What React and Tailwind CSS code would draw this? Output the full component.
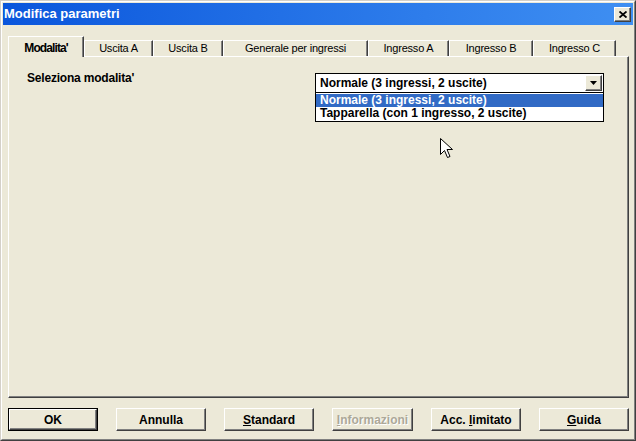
const tabs = [
  { label: "Modalita'", w: "w-[76px]", active: true },
  { label: "Uscita A", w: "w-[69px]" },
  { label: "Uscita B", w: "w-[70px]" },
  { label: "Generale per ingressi", w: "w-[145px]" },
  { label: "Ingresso A", w: "w-[81px]" },
  { label: "Ingresso B", w: "w-[84px]" },
  { label: "Ingresso C", w: "w-[83px]" },
];

const raised =
  "border border-t-white border-l-white border-r-[#404040] border-b-[#404040] shadow-[inset_-1px_-1px_0_#808080] bg-[#ece9d8]";

function Tab({ label, w, active }) {
  if (active) {
    return (
      <div
        className={`${w} h-[21px] -mb-[1px] relative z-10 bg-[#ece9d8] border-t border-l border-t-white border-l-white border-r border-r-[#404040] shadow-[inset_-1px_0_0_#808080] pt-[3px] text-center text-[12px] leading-[16px] font-bold tracking-[-0.9px]`}
      >
        {label}
      </div>
    );
  }
  return (
    <div
      className={`${w} h-[16px] border-t border-l border-t-white border-l-white border-r border-r-[#404040] shadow-[inset_-1px_0_0_#808080] text-center text-[11px] leading-[15px] tracking-[-0.2px]`}
    >
      {label}
    </div>
  );
}

function Button({ children, w = "w-[90px]", isDefault, disabled }) {
  const text = disabled
    ? "text-[#aca899] [text-shadow:1px_1px_0_#ffffff]"
    : "text-black";
  const inner = (
    <div
      className={`${raised} h-full w-full flex items-center justify-center text-[12px] font-bold ${text}`}
    >
      <span>{children}</span>
    </div>
  );
  if (isDefault) {
    return <div className={`${w} h-[23px] border border-black`}>{inner}</div>;
  }
  return <div className={`${w} h-[23px]`}>{inner}</div>;
}

export default function App() {
  return (
    <div className="relative w-[636px] h-[441px] bg-[#ece9d8] border border-t-[#d4d0c8] border-l-[#d4d0c8] border-r-[#404040] border-b-[#404040] font-['Liberation_Sans',Arial,sans-serif] text-black select-none overflow-hidden">
      <div className="h-full flex flex-col border border-t-white border-l-white border-r-[#808080] border-b-[#808080] p-[1px]">
        {/* title bar */}
        <div className="h-[22px] flex items-center justify-between pl-[1px] pr-[2px] bg-linear-to-r from-[#0a56dc] to-[#3f8ff2]">
          <span className="text-white font-bold text-[13px] leading-[22px]">
            Modifica parametri
          </span>
          <div className={`${raised} w-[17px] h-[15px] flex items-center justify-center`}>
            <svg width="8" height="7" viewBox="0 0 8 7">
              <path d="M0.5 0.5 L7.5 6.5 M7.5 0.5 L0.5 6.5" stroke="#000" strokeWidth="1.8" />
            </svg>
          </div>
        </div>

        <div className="flex-1 flex flex-col pl-[5px] pr-[4px] pt-[11px] pb-[7px]">
          {/* tabs */}
          <div className="flex items-end h-[20px]">
            {tabs.map((t) => (
              <Tab key={t.label} {...t} />
            ))}
          </div>

          {/* panel */}
          <div className="flex-1 flex items-start border border-t-white border-l-white border-r-[#404040] border-b-[#404040] shadow-[inset_-1px_-1px_0_#808080]">
            <div className="w-[306px] pl-[18px] mt-[14px] text-[12px] leading-[15px] font-bold tracking-[-0.2px]">
              Seleziona modalita'
            </div>
            <div className="relative mt-[16px] w-[289px] h-[20px] bg-white border border-black flex items-center justify-between">
              <span className="pl-[4px] text-[12px] leading-[18px] font-bold">
                Normale (3 ingressi, 2 uscite)
              </span>
              <div className={`${raised} w-[17px] h-[16px] mr-[1px] flex items-center justify-center`}>
                <svg width="7" height="4" viewBox="0 0 7 4">
                  <path d="M0 0 H7 L3.5 4 Z" fill="#000" />
                </svg>
              </div>
              <div className="absolute left-[-1px] top-[18px] w-[289px] h-[30px] bg-white border border-black py-[1px] z-20">
                <div className="h-[13px] bg-[#316ac5] text-white pl-[4px] text-[12px] leading-[13px] font-bold">
                  Normale (3 ingressi, 2 uscite)
                </div>
                <div className="h-[13px] pl-[4px] text-[12px] leading-[13px] font-bold">
                  Tapparella (con 1 ingresso, 2 uscite)
                </div>
              </div>
            </div>
          </div>

          {/* buttons */}
          <div className="mt-[10px] flex justify-between">
            <Button isDefault>OK</Button>
            <Button>Annulla</Button>
            <Button>
              <span className="underline">S</span>tandard
            </Button>
            <Button w="w-[81px]" disabled>
              <span className="underline">I</span>nformazioni
            </Button>
            <Button>
              Acc. <span className="underline">l</span>imitato
            </Button>
            <Button>
              <span className="underline">G</span>uida
            </Button>
          </div>
        </div>
      </div>

      {/* mouse pointer */}
      <svg
        className="absolute left-[439px] top-[137px] z-30"
        width="13"
        height="21"
        viewBox="0 0 13 21"
      >
        <path
          d="M0.5 0.5 L0.5 16.5 L4.5 12.5 L7.5 19.5 L10 18.5 L7 11.5 L12.5 11.5 Z"
          fill="#fff"
          stroke="#000"
          strokeWidth="1"
        />
      </svg>
    </div>
  );
}
